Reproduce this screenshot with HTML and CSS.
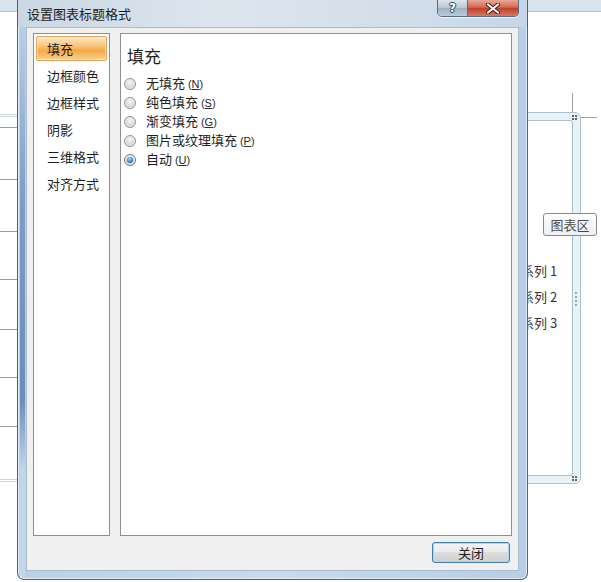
FILE: index.html
```html
<!DOCTYPE html>
<html lang="zh-CN">

<head>
  <meta charset="UTF-8" />
  <title>设置图表标题格式</title>
  <link rel="stylesheet" href="styles.css">
</head>

<body>
  <!-- Worksheet behind the dialog -->
  <div class="sheet">
    <div class="sheet-band"></div>

    <div class="plot-left">
      <div class="plot-row" style="height: 11px"></div>
      <div class="plot-row" style="height: 52px"></div>
      <div class="plot-row" style="height: 52px"></div>
      <div class="plot-row" style="height: 48px"></div>
      <div class="plot-row" style="height: 50px"></div>
      <div class="plot-row" style="height: 48px"></div>
      <div class="plot-row" style="height: 49px"></div>
      <div class="plot-row last" style="height: 55px"></div>
    </div>

    <div class="cross-v"></div>
    <div class="cross-h"></div>

    <div class="chart-frame">
      <div class="chart-inner"></div>
    </div>
    <div class="handle handle-top"><i></i><i></i><i></i><i></i></div>
    <div class="handle handle-bottom"><i></i><i></i><i></i><i></i></div>
    <div class="handle handle-mid"><i></i><i></i><i></i><i></i></div>

    <div class="tip">图表区</div>

    <ul class="legend">
      <li>系列 1</li>
      <li>系列 2</li>
      <li>系列 3</li>
    </ul>
  </div>

  <!-- Dialog -->
  <div class="dialog">
    <div class="titlebar">
      <div class="title">设置图表标题格式</div>
      <div class="caption-buttons">
        <div class="cap-help">?</div>
        <div class="cap-close">
          <svg width="14" height="11" viewBox="0 0 14 11">
            <path d="M2 1.5 L12 9.5 M12 1.5 L2 9.5" stroke="#4a1a12" stroke-width="4" stroke-linecap="round" />
            <path d="M2 1.5 L12 9.5 M12 1.5 L2 9.5" stroke="#ffffff" stroke-width="2.2" stroke-linecap="round" />
          </svg>
        </div>
      </div>
    </div>

    <div class="content">
      <div class="panes">
        <ul class="nav">
          <li class="active">填充</li>
          <li>边框颜色</li>
          <li>边框样式</li>
          <li>阴影</li>
          <li>三维格式</li>
          <li>对齐方式</li>
        </ul>

        <div class="page">
          <h2>填充</h2>
          <ul class="options">
            <li><span class="radio"></span><span>无填充 <span class="key">(<u>N</u>)</span></span></li>
            <li><span class="radio"></span><span>纯色填充 <span class="key">(<u>S</u>)</span></span></li>
            <li><span class="radio"></span><span>渐变填充 <span class="key">(<u>G</u>)</span></span></li>
            <li><span class="radio"></span><span>图片或纹理填充 <span class="key">(<u>P</u>)</span></span></li>
            <li><span class="radio checked"></span><span>自动 <span class="key">(<u>U</u>)</span></span></li>
          </ul>
        </div>
      </div>

      <div class="footer">
        <button class="close-btn">关闭</button>
      </div>
    </div>
  </div>
</body>

</html>
```

FILE: styles.css
```css
* {
  margin: 0;
  padding: 0;
  box-sizing: border-box;
}

body {
  width: 601px;
  height: 582px;
  overflow: hidden;
  background-color: #ffffff;
  font-family: "Noto Sans CJK SC", "Noto Sans", sans-serif;
  font-size: 13px;
  color: #1e1e1e;
  position: relative;
}

ul {
  list-style: none;
}

/* Worksheet */
.sheet {
  position: relative;
  width: 601px;
  height: 582px;
}

.sheet-band {
  height: 12px;
  background-color: #d8e3ef;
  border-bottom: 1px solid #b7c6d6;
}

.plot-left {
  position: absolute;
  left: 0;
  top: 114px;
  width: 18px;
  border-top: 3px double #c4dbd8;
}

.plot-row {
  border-bottom: 1px solid #9d9d9d;
}

.plot-row.last {
  border-bottom: 3px double #c4dbd8;
}

.cross-v {
  position: absolute;
  left: 572px;
  top: 93px;
  width: 1px;
  height: 20px;
  background-color: #a0a0a0;
}

.cross-h {
  position: absolute;
  left: 580px;
  top: 117px;
  width: 17px;
  height: 1px;
  background-color: #a0a0a0;
}

.chart-frame {
  position: absolute;
  left: 480px;
  top: 112px;
  width: 101px;
  height: 372px;
  border: 1px solid #a9c2cf;
  border-radius: 0 6px 6px 0;
  background-color: #e9f2f7;
  padding: 7px 7px 7px 0;
}

.chart-inner {
  height: 100%;
  border: 1px solid #a9c2cf;
  border-left: none;
  border-radius: 0 3px 3px 0;
  background-color: #ffffff;
}

.handle {
  position: absolute;
  display: grid;
  grid-template-columns: 2px 2px;
  gap: 1px;
}

.handle i {
  width: 2px;
  height: 2px;
  background-color: #666666;
}

.handle-top {
  left: 572px;
  top: 115px;
}

.handle-bottom {
  left: 572px;
  top: 476px;
}

.handle-mid {
  left: 575px;
  top: 292px;
  grid-template-columns: 2px;
  gap: 2px;
}

.handle-mid i {
  background-color: #9aa7b0;
}

.tip {
  position: absolute;
  left: 543px;
  top: 213px;
  width: 54px;
  height: 23px;
  border: 1px solid #8a8a8a;
  border-radius: 3px;
  background: linear-gradient(#ffffff, #eceef2);
  color: #4c4c4c;
  font-size: 13px;
  line-height: 21px;
  text-align: center;
}

.legend {
  position: absolute;
  left: 521px;
  top: 260px;
  color: #333333;
  font-size: 13px;
}

.legend li {
  height: 26px;
  line-height: 22px;
}

/* Dialog */
.dialog {
  position: absolute;
  left: 17px;
  top: 0;
  width: 511px;
  height: 580px;
  border: 1px solid #4f6174;
  border-top: none;
  border-radius: 0 0 7px 7px;
  padding: 0 8px 8px 8px;
  background:
    linear-gradient(#c3d6ea 0, #7d9dc5 200px, #6c8dba 400px, #c3d6ea 470px) 2px 0 / 5px 100% no-repeat,
    linear-gradient(to right, #b9d0e8, #c8daed 50%, #b7cee6);
  box-shadow: inset 1px 0 0 #e3edf7, inset -1px 0 0 #e3edf7, inset 0 -1px 0 #e3edf7;
}

.titlebar {
  height: 27px;
  margin: 0 -8px;
  display: flex;
  align-items: flex-start;
  background: linear-gradient(to right, #cbd7e4, #dde6ef 40%, #d3deea 75%, #c6d6e8);
}

.title {
  flex: 1;
  padding-left: 9px;
  line-height: 27px;
  font-size: 13px;
  color: #1b1b1b;
}

.caption-buttons {
  display: flex;
  margin-right: 8px;
  border: 1px solid #5b6b7e;
  border-top: none;
  border-radius: 0 0 5px 5px;
  overflow: hidden;
  box-shadow: 0 1px 0 rgba(255, 255, 255, 0.7);
}

.cap-help {
  width: 30px;
  height: 16px;
  background: linear-gradient(#dde5ee, #b9c6d5 50%, #9fb0c4 51%, #bccad9);
  border-right: 1px solid #5b6b7e;
  color: #ffffff;
  font-family: "DejaVu Sans", sans-serif;
  font-weight: bold;
  font-size: 12px;
  line-height: 16px;
  text-align: center;
  text-shadow: 1px 0 0 #2e3f52, -1px 0 0 #2e3f52, 0 1px 0 #2e3f52, 0 -1px 0 #2e3f52;
}

.cap-close {
  width: 50px;
  height: 16px;
  background: linear-gradient(#e9a898, #d46a53 45%, #c2402a 52%, #d7775f);
  display: flex;
  align-items: center;
  justify-content: center;
}

.content {
  height: 544px;
  border: 1px solid #a9bbcf;
  background-color: #f0f0f0;
  padding: 5px 6px 7px 6px;
  display: flex;
  flex-direction: column;
}

.panes {
  display: flex;
  gap: 10px;
  height: 503px;
}

.nav {
  width: 77px;
  border: 1px solid #8e8f8f;
  background-color: #ffffff;
  padding: 2px;
}

.nav li {
  height: 25px;
  margin-bottom: 2px;
  padding-left: 11px;
  line-height: 25px;
  font-size: 13px;
  color: #1e1e1e;
}

.nav li.active {
  border: 1px solid #e2a35c;
  border-radius: 2px;
  padding-left: 10px;
  line-height: 23px;
  background: linear-gradient(#fde9c8, #f9c27a 40%, #f5a844 60%, #fbd194);
  box-shadow: inset 0 0 0 1px rgba(255, 240, 210, 0.6);
}

.page {
  flex: 1;
  border: 1px solid #8e8f8f;
  background-color: #ffffff;
}

.page h2 {
  margin-top: 11px;
  padding-left: 6px;
  height: 22px;
  line-height: 22px;
  font-size: 17px;
  font-weight: normal;
  color: #1e1e1e;
}

.options {
  margin-top: 7px;
  padding-left: 3px;
}

.options li {
  height: 19px;
  display: flex;
  align-items: center;
  gap: 10px;
  font-size: 13px;
  line-height: 19px;
}

.key {
  font-family: "Liberation Sans", sans-serif;
  font-size: 11px;
  color: #2a2a2a;
}

.radio {
  width: 12px;
  height: 12px;
  border-radius: 50%;
  border: 1px solid #939393;
  background: radial-gradient(circle at 50% 35%, #f6f6f6, #dadada 55%, #c4c4c4);
  box-shadow: inset 0 0 0 1px #eeeeee;
  display: flex;
  align-items: center;
  justify-content: center;
}

.radio.checked {
  border-color: #5f7d99;
}

.radio.checked::after {
  content: "";
  width: 6px;
  height: 6px;
  border-radius: 50%;
  background: radial-gradient(circle at 45% 35%, #a8dcf8, #2b7ac0 60%, #0f3f72);
}

.footer {
  margin-top: 6px;
  display: flex;
  justify-content: flex-end;
  padding-right: 2px;
}

.close-btn {
  width: 78px;
  height: 21px;
  border: 1px solid #3c7fb1;
  border-radius: 3px;
  background: linear-gradient(#f4f4f4, #ebebeb 48%, #dddddd 50%, #cfcfcf);
  box-shadow: inset 0 0 0 1px #a7d8f5;
  font-family: "Noto Sans CJK SC", sans-serif;
  font-size: 13px;
  line-height: 17px;
  color: #1e1e1e;
}
```
